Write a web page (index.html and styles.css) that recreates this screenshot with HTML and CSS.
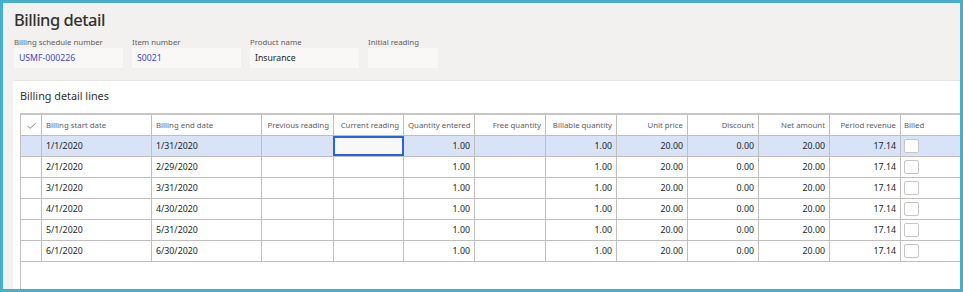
FILE: index.html
```html
<!DOCTYPE html>
<html lang="en">
<head>
    <meta charset="UTF-8">
    <meta name="viewport" content="width=device-width, initial-scale=1.0">
    <title>Billing detail</title>
    <link rel="stylesheet" href="styles.css">
</head>
<body>
    <div class="frame">
        <div class="page-head">
            <h1>Billing detail</h1>
            <div class="fields">
                <div class="field">
                    <label>Billing schedule number</label>
                    <div class="value link">USMF-000226</div>
                </div>
                <div class="field">
                    <label>Item number</label>
                    <div class="value link">S0021</div>
                </div>
                <div class="field">
                    <label>Product name</label>
                    <div class="value">Insurance</div>
                </div>
                <div class="field short">
                    <label>Initial reading</label>
                    <div class="value"></div>
                </div>
            </div>
        </div>

        <div class="card">
            <h2>Billing detail lines</h2>
            <div class="grid-wrap">
                <table class="grid">
                    <thead>
                        <tr>
                            <th class="c-check">
                                <svg width="9" height="6" viewBox="0 0 9 6"><path d="M0.5 2.8 L3 5.3 L8.5 0.5" fill="none" stroke="#8a8886" stroke-width="1"/></svg>
                            </th>
                            <th class="c-date">Billing start date</th>
                            <th class="c-date">Billing end date</th>
                            <th class="c-prev num">Previous reading</th>
                            <th class="c-cur num">Current reading</th>
                            <th class="c-n num">Quantity entered</th>
                            <th class="c-n num">Free quantity</th>
                            <th class="c-n num">Billable quantity</th>
                            <th class="c-n num">Unit price</th>
                            <th class="c-n num">Discount</th>
                            <th class="c-n num">Net amount</th>
                            <th class="c-n num">Period revenue</th>
                            <th class="c-billed">Billed</th>
                        </tr>
                    </thead>
                    <tbody>
                        <tr class="selected">
                            <td></td>
                            <td>1/1/2020</td>
                            <td>1/31/2020</td>
                            <td></td>
                            <td class="editing"><div class="edit-box"></div></td>
                            <td class="num">1.00</td>
                            <td></td>
                            <td class="num">1.00</td>
                            <td class="num">20.00</td>
                            <td class="num">0.00</td>
                            <td class="num">20.00</td>
                            <td class="num">17.14</td>
                            <td><span class="checkbox"></span></td>
                        </tr>
                        <tr>
                            <td></td>
                            <td>2/1/2020</td>
                            <td>2/29/2020</td>
                            <td></td>
                            <td></td>
                            <td class="num">1.00</td>
                            <td></td>
                            <td class="num">1.00</td>
                            <td class="num">20.00</td>
                            <td class="num">0.00</td>
                            <td class="num">20.00</td>
                            <td class="num">17.14</td>
                            <td><span class="checkbox"></span></td>
                        </tr>
                        <tr>
                            <td></td>
                            <td>3/1/2020</td>
                            <td>3/31/2020</td>
                            <td></td>
                            <td></td>
                            <td class="num">1.00</td>
                            <td></td>
                            <td class="num">1.00</td>
                            <td class="num">20.00</td>
                            <td class="num">0.00</td>
                            <td class="num">20.00</td>
                            <td class="num">17.14</td>
                            <td><span class="checkbox"></span></td>
                        </tr>
                        <tr>
                            <td></td>
                            <td>4/1/2020</td>
                            <td>4/30/2020</td>
                            <td></td>
                            <td></td>
                            <td class="num">1.00</td>
                            <td></td>
                            <td class="num">1.00</td>
                            <td class="num">20.00</td>
                            <td class="num">0.00</td>
                            <td class="num">20.00</td>
                            <td class="num">17.14</td>
                            <td><span class="checkbox"></span></td>
                        </tr>
                        <tr>
                            <td></td>
                            <td>5/1/2020</td>
                            <td>5/31/2020</td>
                            <td></td>
                            <td></td>
                            <td class="num">1.00</td>
                            <td></td>
                            <td class="num">1.00</td>
                            <td class="num">20.00</td>
                            <td class="num">0.00</td>
                            <td class="num">20.00</td>
                            <td class="num">17.14</td>
                            <td><span class="checkbox"></span></td>
                        </tr>
                        <tr>
                            <td></td>
                            <td>6/1/2020</td>
                            <td>6/30/2020</td>
                            <td></td>
                            <td></td>
                            <td class="num">1.00</td>
                            <td></td>
                            <td class="num">1.00</td>
                            <td class="num">20.00</td>
                            <td class="num">0.00</td>
                            <td class="num">20.00</td>
                            <td class="num">17.14</td>
                            <td><span class="checkbox"></span></td>
                        </tr>
                    </tbody>
                </table>
            </div>
        </div>
    </div>
</body>
</html>
```

FILE: styles.css
```css
body {
    margin: 0;
    font-family: "Segoe UI", "Noto Sans", sans-serif;
    color: #201f1e;
}
.frame {
    height: 292px;
    box-sizing: border-box;
    border: 3px solid #4aaec8;
    background-color: #f2f1f0;
    display: flex;
    flex-direction: column;
    overflow: hidden;
}
.page-head {
    padding: 6px 0 0 11px;
    height: 78px;
    box-sizing: border-box;
}
h1 {
    margin: 0;
    font-size: 16.5px;
    line-height: 21px;
    font-weight: 500;
    color: #323130;
    letter-spacing: -0.5px;
}
.fields {
    display: flex;
    gap: 9px;
    margin-top: 7px;
}
.field {
    width: 109px;
}
.field.short {
    width: 70px;
}
.field label {
    display: block;
    font-size: 7.8px;
    line-height: 10px;
    color: #605e5c;
    margin-bottom: 1px;
}
.value {
    height: 20px;
    line-height: 20px;
    background-color: #f9f8f7;
    padding-left: 5px;
    font-size: 8.7px;
    color: #201f1e;
}
.value.link {
    color: #4149c6;
}
.card {
    flex: 1;
    margin-left: 10px;
    background-color: #fff;
    display: flex;
    flex-direction: column;
    padding: 8px 0 0 7px;
    box-shadow: 0 -1px 0 #e8e6e4;
}
h2 {
    margin: 0 0 10px 0;
    font-size: 10.8px;
    line-height: 14px;
    font-weight: 400;
    color: #323130;
}
.grid-wrap {
    flex: 1;
    border-left: 1px solid #c1bfbd;
    border-top: 2px solid #c8c6c4;
}
.grid {
    width: 100%;
    table-layout: fixed;
    border-collapse: separate;
    border-spacing: 0;
}
.grid th,
.grid td {
    box-sizing: border-box;
    height: 21px;
    padding: 0 4px;
    border-right: 1px solid #c1bfbd;
    border-bottom: 1px solid #c1bfbd;
    white-space: nowrap;
    overflow: hidden;
    vertical-align: middle;
    text-align: left;
}
.grid th {
    font-size: 7.8px;
    font-weight: 400;
    color: #605e5c;
}
.grid td {
    font-size: 8.8px;
    color: #201f1e;
}
.grid th:last-child,
.grid td:last-child {
    border-right: none;
    padding-left: 3px;
}
.grid .num {
    text-align: right;
}
.c-check { width: 21px; text-align: center !important; padding: 0 !important; }
.c-check svg { display: block; margin: 1px auto 0; }
.c-date { width: 110px; }
.c-prev { width: 72px; }
.c-cur { width: 70px; }
.c-n { width: 71px; }
.grid tr.selected td {
    background-color: #d8e3f8;
}
.grid td.editing {
    padding: 0;
    overflow: visible;
}
.edit-box {
    margin-left: -1px;
    width: calc(100% + 2px);
    height: 20px;
    box-sizing: border-box;
    border: 2px solid #2566e0;
    background-color: #f9f8f7;
}
.checkbox {
    display: block;
    width: 15px;
    height: 14px;
    box-sizing: border-box;
    border: 1px solid #c8c6c4;
    border-radius: 2px;
    background-color: #fff;
}
```
